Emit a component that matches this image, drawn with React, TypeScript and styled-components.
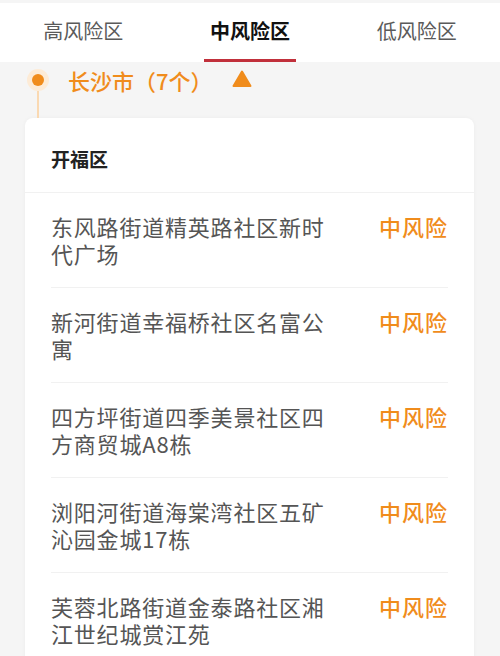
import styled, { createGlobalStyle } from "styled-components";

const GlobalStyle = createGlobalStyle`
  html, body {
    margin: 0;
    padding: 0;
    background: #f5f5f5;
    font-family: "Noto Sans CJK SC", "Noto Sans", sans-serif;
  }
`;

const ORANGE = "#f08c1c";

type tabProps = {
  active?: boolean;
};

type rowData = {
  name: string;
  level: string;
};

const rows: rowData[] = [
  { name: "东风路街道精英路社区新时代广场", level: "中风险" },
  { name: "新河街道幸福桥社区名富公寓", level: "中风险" },
  { name: "四方坪街道四季美景社区四方商贸城A8栋", level: "中风险" },
  { name: "浏阳河街道海棠湾社区五矿沁园金城17栋", level: "中风险" },
  { name: "芙蓉北路街道金泰路社区湘江世纪城赏江苑", level: "中风险" },
];

const Page = styled.div`
  width: 500px;
  height: 656px;
  overflow: hidden;
  padding-top: 3px;
  box-sizing: border-box;
  background: #f5f5f5;
`;

const TabBar = styled.div`
  display: grid;
  grid-template-columns: repeat(3, 1fr);
  height: 59px;
  background: #ffffff;
`;

const Tab = styled.div<tabProps>`
  position: relative;
  display: flex;
  align-items: center;
  justify-content: center;
  padding-bottom: 4px;
  font-size: 20px;
  color: ${(p) => (p.active ? "#111111" : "#5a5a5a")};
  font-weight: ${(p) => (p.active ? 600 : 400)};

  &::after {
    content: "";
    display: ${(p) => (p.active ? "block" : "none")};
    position: absolute;
    bottom: 0;
    left: 37px;
    right: 37px;
    height: 3px;
    background: #c1303b;
  }
`;

const Section = styled.div`
  padding: 0 26px 0 25px;
`;

const CityRow = styled.div`
  display: flex;
  height: 56px;
`;

const Marker = styled.div`
  display: flex;
  flex-direction: column;
  align-items: center;
  width: 24px;
  margin-left: 1px;
  padding-top: 7px;
`;

const Dot = styled.div`
  width: 22px;
  height: 22px;
  border-radius: 50%;
  background: #fdebd6;
  display: flex;
  align-items: center;
  justify-content: center;
  flex-shrink: 0;

  &::before {
    content: "";
    width: 12px;
    height: 12px;
    border-radius: 50%;
    background: ${ORANGE};
  }
`;

const Line = styled.div`
  flex: 1;
  width: 2px;
  background: #fad9b2;
`;

const CityName = styled.div`
  margin-left: 18px;
  line-height: 36px;
  font-size: 22px;
  font-weight: 500;
  color: ${ORANGE};
`;

const Arrow = styled.svg`
  width: 20px;
  height: 18px;
  margin: 8px 0 0 19px;
`;

const Card = styled.div`
  background: #ffffff;
  border-radius: 8px;
  box-shadow: 0 0 4px rgba(0, 0, 0, 0.04);
`;

const CardHeader = styled.div`
  height: 75px;
  padding: 0 26px;
  display: flex;
  align-items: center;
  padding-top: 6px;
  box-sizing: border-box;
  font-size: 19px;
  font-weight: 700;
  color: #222222;
  border-bottom: 1px solid #f1f1f1;
`;

const List = styled.div`
  padding: 0 26px;
`;

const Row = styled.div`
  display: flex;
  justify-content: space-between;
  align-items: flex-start;
  padding: 20px 0;
  border-top: 1px solid #f1f1f1;

  &:first-child {
    border-top: none;
  }
`;

const Name = styled.div`
  width: 290px;
  font-size: 22px;
  letter-spacing: 0.8px;
  line-height: 27px;
  color: #555555;
`;

const Level = styled.div`
  font-size: 22px;
  letter-spacing: 1px;
  line-height: 27px;
  color: ${ORANGE};
  font-weight: 500;
`;

const App = () => {
  return (
    <>
      <GlobalStyle />
      <Page>
        <TabBar>
          <Tab>高风险区</Tab>
          <Tab active>中风险区</Tab>
          <Tab>低风险区</Tab>
        </TabBar>
        <Section>
          <CityRow>
            <Marker>
              <Dot />
              <Line />
            </Marker>
            <CityName>长沙市（7个）</CityName>
            <Arrow viewBox="0 0 20 18">
              <path
                d="M10 1.5 L18.5 16 L1.5 16 Z"
                fill={ORANGE}
                stroke={ORANGE}
                strokeWidth="2"
                strokeLinejoin="round"
              />
            </Arrow>
          </CityRow>
          <Card>
            <CardHeader>开福区</CardHeader>
            <List>
              {rows.map((r) => (
                <Row key={r.name}>
                  <Name>{r.name}</Name>
                  <Level>{r.level}</Level>
                </Row>
              ))}
            </List>
          </Card>
        </Section>
      </Page>
    </>
  );
};

export default App;
